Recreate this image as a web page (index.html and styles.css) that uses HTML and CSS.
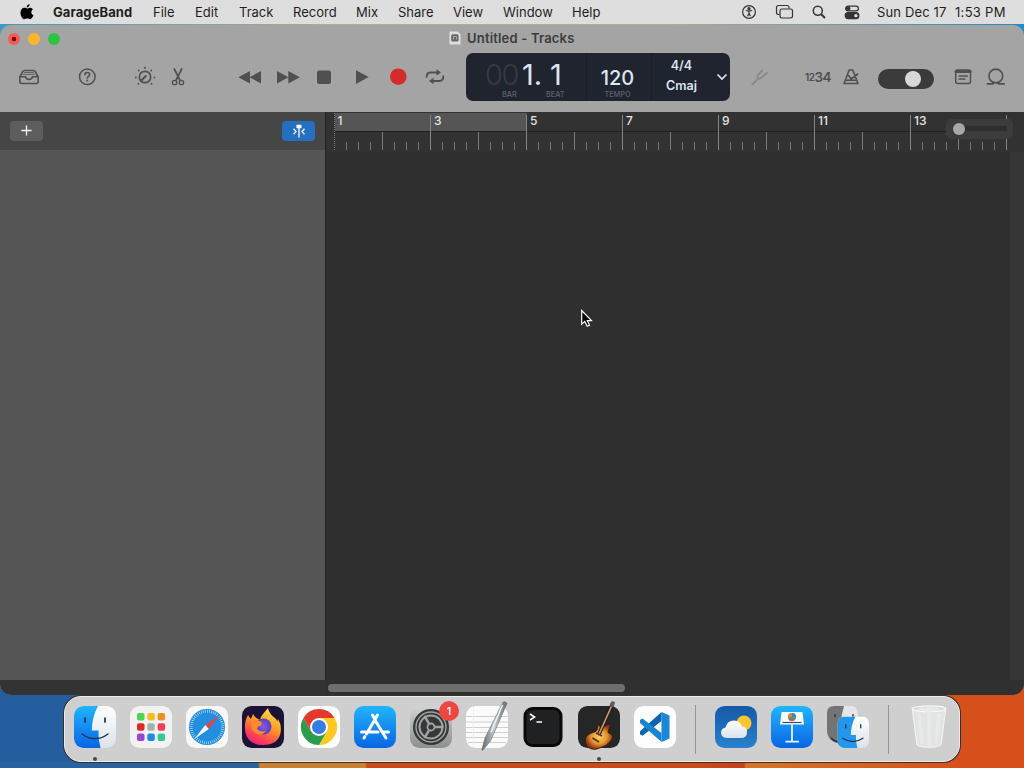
FILE: index.html
```html
<!DOCTYPE html>
<html lang="en">
<head>
    <meta charset="UTF-8">
    <meta name="viewport" content="width=device-width, initial-scale=1.0">
    <title>Untitled - Tracks</title>
    <link rel="stylesheet" href="styles.css">
</head>
<body>
    <header class="menubar">
        <svg class="apple" width="14" height="16" viewBox="0 0 14 16"><path d="M9.6 0.3c.1 1.7-1.300 3.200-2.900 3.200C6.500 1.900 8 .5 9.600.3zM7 4.500c.8 0 1.600-.8 3-.8 1.200 0 2.300.6 3 1.600-2.500 1.500-2.100 5 .5 6-.6 1.600-2 4-3.500 4-1.100 0-1.500-.7-2.800-.7s-1.800.7-2.800.7C2.600 15.300.5 11.900.5 8.700c0-3.100 1.900-4.900 3.900-4.900 1.200 0 2 .7 2.600.7z"/></svg>
        <nav class="menus">
            <b>GarageBand</b>
            <span>File</span>
            <span>Edit</span>
            <span>Track</span>
            <span>Record</span>
            <span>Mix</span>
            <span>Share</span>
            <span>View</span>
            <span>Window</span>
            <span>Help</span>
        </nav>
        <div class="status">
            <svg width="16" height="16" viewBox="0 0 16 16"><circle cx="8" cy="8" r="6.400"/><circle cx="8" cy="4.700" r="1" class="fill"/><path d="M4.800 6.500L8 7.100l3.200-.6M8 7v2.200L6.600 12.200M8 9.200l1.400 3"/></svg>
            <svg width="19" height="16" viewBox="0 0 19 16"><path d="M4.500 10.500H3.400a1.900 1.900 0 0 1-1.900-1.900V3.400a1.900 1.900 0 0 1 1.900-1.900h8.700A1.900 1.900 0 0 1 14 3.400v1.100"/><rect x="5" y="5" width="12.500" height="9" rx="1.900"/></svg>
            <svg width="16" height="16" viewBox="0 0 16 16"><circle cx="6.800" cy="6.800" r="4.500" stroke-width="1.500"/><path d="M10.200 10.200L14 14" stroke-width="2"/></svg>
            <svg width="16" height="16" viewBox="0 0 16 16"><rect x="1.600" y="2.100" width="12.800" height="4.800" rx="2.400"/><circle cx="4.200" cy="4.500" r="1.700" class="fill"/><rect x="1.200" y="8.700" width="13.600" height="5.900" rx="2.900" class="fill"/><circle cx="11.900" cy="11.650" r="1.700" fill="#ddd" stroke="none"/></svg>
            <span class="date">Sun Dec 17</span>
            <span class="time">1:53 PM</span>
        </div>
    </header>

    <main class="window">
        <div class="titlebar">
            <div class="lights"><i class="close"></i><i class="minimize"></i><i class="zoom"></i></div>
            <div class="title">
                <svg width="12" height="14" viewBox="0 0 12 14"><path d="M.5.5h8.300l2.700 2.700v10.300H.5z" fill="#dedede"/><rect x="2.200" y="3.200" width="7.400" height="7.400" rx="1.500" fill="#666"/><path d="M4.500 8.500V5.500h3v3" stroke="#aaa" fill="none"/></svg>
                <span>Untitled - Tracks</span>
            </div>
        </div>

        <div class="toolbar">
            <svg class="tool" viewBox="0 0 24 24"><path d="M2.800 12L5.500 7Q6.300 5.500 7.900 5.500h8.200q1.600 0 2.400 1.500L21.200 12v4.500q0 2-2 2H4.800q-2 0-2-2zM3 11.700h5.500q.5 2.800 3.500 2.800t3.500-2.800H21" stroke-width="1.600"/><path d="M6.200 9.400h11.600M7.500 7.500h9" stroke-width=".8"/></svg>
            <svg class="tool" viewBox="0 0 24 24"><circle cx="12.300" cy="11.700" r="7.800" stroke-width="1.500"/><path d="M9.900 9.800q0-2.300 2.400-2.300t2.400 2.100c0 1.700-2.400 1.700-2.400 3.400" stroke-width="1.600"/><circle cx="12.300" cy="15.500" r="1" class="fill"/></svg>
            <svg class="tool" viewBox="0 0 24 24"><circle cx="12" cy="12" r="5.700" stroke-width="1.700"/><path d="M8.800 15l4-4" stroke-width="2"/><path d="M12 2.800v.1M5.700 5.500v.1M18.300 5.500v.1M2.800 12.500v.1M21.300 12.500v.1M5.500 18.700v.1M18.500 18.700v.1" stroke-width="1.900"/></svg>
            <svg class="tool" viewBox="0 0 24 24"><path d="M8.300 4l5.800 11.500M15.700 4L9.900 15.500" stroke-width="1.700"/><circle cx="8.600" cy="17.500" r="2.200"/><circle cx="15.400" cy="17.500" r="2.200"/></svg>
            <svg class="tool solid" viewBox="0 0 24 24"><path d="M.3 12.300L12 6v12.600zM11.500 12.300L23 6v12.600z"/></svg>
            <svg class="tool solid" viewBox="0 0 24 24"><path d="M1 6l11.500 6.300L1 18.600zM12.300 6l11.500 6.300-11.500 6.300z"/></svg>
            <svg class="tool solid" viewBox="0 0 24 24"><rect x="5" y="5.500" width="14" height="13.500" rx="2"/></svg>
            <svg class="tool solid" viewBox="0 0 24 24"><path d="M6 5.300l12.700 6.800L6 18.900z"/></svg>
            <svg class="tool" viewBox="0 0 24 24"><circle cx="12.300" cy="11.700" r="8.300" fill="#d42c2b" stroke="none"/></svg>
            <svg class="tool" viewBox="0 0 24 24"><path d="M3.700 11.700q0-4.200 4-4.200h7M20.300 11.300q0 4.700-4 4.700h-7" stroke-width="1.900"/><path d="M13.500 4.200l4.500 3.300-4.500 3.300zM10.500 12.700L6 16l4.500 3.300z" class="fill"/></svg>

            <section class="lcd">
                <div class="position">
                    <span class="digits"><em>00</em><span>1.</span><span>1</span></span>
                    <span class="captions"><small>BAR</small><small>BEAT</small></span>
                </div>
                <div class="tempo"><span>120</span><small>TEMPO</small></div>
                <div class="key"><span>4/4</span><span>Cmaj</span></div>
                <div class="more"><svg width="12" height="8" viewBox="0 0 12 8"><path d="M1.500 1.500L6 6l4.500-4.500"/></svg></div>
            </section>

            <svg class="tool faint" viewBox="0 0 24 24"><path d="M4.500 19.500L9 15M14 5.500l-3.500 4q-1.900 2.300-.6 3.600t3.600-.6l5.500-4.500" stroke-width="1.900"/></svg>
            <span class="count"><small>12</small>34</span>
            <svg class="tool" viewBox="0 0 24 24"><path d="M10.200 5h3.600l5.200 13.500H5zM6.300 15.200h11.400M11.500 14.500L18.700 9M9.500 10.500l2.500 3" stroke-width="1.600"/></svg>
            <div class="switch"><i></i></div>
            <svg class="tool" viewBox="0 0 24 24"><rect x="4.700" y="5" width="14.800" height="13.500" rx="2" stroke-width="1.500"/><path d="M5 6.500h14.200" stroke-width="3"/><path d="M8 11h8.500M8 14h6"/></svg>
            <svg class="tool" viewBox="0 0 24 24"><circle cx="11.800" cy="11" r="6.900" stroke-width="1.600"/><path d="M3.300 18.900h4.500q2 0 2-1.500M20.300 18.900h-4.500q-2 0-2-1.500" stroke-width="1.600"/></svg>
        </div>

        <div class="workspace">
            <aside class="tracks">
                <div class="tracks-head">
                    <button class="add"><svg width="14" height="14" viewBox="0 0 14 14"><path d="M7 1.500v11M1.500 7h11"/></svg></button>
                    <button class="catch"><svg width="14" height="14" viewBox="0 0 14 14"><path d="M4.500 .8h5v3.400h-5z" fill="#fff" stroke="none"/><path d="M7 3v10.500M1.500 4.800L4 7.600l-2.500 2.800M12.500 4.800L10 7.600l2.500 2.800"/></svg></button>
                </div>
                <div class="track-list"></div>
                <div class="strip"></div>
            </aside>
            <section class="arrange">
                <div class="ruler">
                    <!-- one bar is 48px, one beat is 12px -->
                    <svg class="scale" width="699" height="40" viewBox="325 112 699 40">
                        <defs>
                            <pattern id="beat" x="334" y="142" width="12" height="8" patternUnits="userSpaceOnUse"><rect width="1" height="8" fill="#757575"/></pattern>
                            <pattern id="bar" x="334" y="132" width="48" height="18" patternUnits="userSpaceOnUse"><rect width="1" height="18" fill="#7c7c7c"/></pattern>
                            <pattern id="bars" x="334" y="115" width="96" height="35" patternUnits="userSpaceOnUse"><rect width="1" height="35" fill="#858585"/></pattern>
                        </defs>
                        <rect x="335" y="113" width="192" height="18" fill="#555"/>
                        <path d="M334 131.500h676" stroke="#202020"/>
                        <rect x="340" y="142" width="669" height="8" fill="url(#beat)"/>
                        <rect x="340" y="132" width="669" height="18" fill="url(#bar)"/>
                        <rect x="340" y="115" width="669" height="35" fill="url(#bars)"/>
                        <path d="M334.500 113v38" stroke="#777" stroke-dasharray="1 1"/>
                        <g class="numbers">
                            <text x="337.500" y="125">1</text><text x="434" y="125">3</text><text x="530" y="125">5</text><text x="626" y="125">7</text><text x="722" y="125">9</text><text x="818" y="125">11</text><text x="914" y="125">13</text>
                        </g>
                    </svg>
                    <div class="hzoom"><i></i></div>
                </div>
                <div class="canvas">
                    <svg class="pointer" width="14" height="20" viewBox="0 0 14 20"><path d="M1.700 1.500v13.700l3.100-2.800 2.400 4.800 2.300-1.100-2.200-4.400h4.200z" fill="#050505" stroke="#fff" stroke-width="1.200"/></svg>
                </div>
                <div class="strip"><i class="scrollbar"></i></div>
            </section>
        </div>
    </main>

    <footer class="dock">
        <div class="app running">
            <svg viewBox="0 0 42 42">
                <defs>
                    <linearGradient id="blue" x2="0" y2="1"><stop stop-color="#20b5fb"/><stop offset="1" stop-color="#0965e5"/></linearGradient>
                    <linearGradient id="light" x2="0" y2="1"><stop stop-color="#fff"/><stop offset="1" stop-color="#dbe3ed"/></linearGradient>
                    <clipPath id="tile"><rect width="42" height="42" rx="9.500"/></clipPath>
                </defs>
                <g clip-path="url(#tile)">
                    <path d="M0 0h42v42H0z" fill="url(#light)"/>
                    <path d="M0 0h24q-6 11-6.200 24.500h6.700Q24 33 26.500 42H0z" fill="url(#blue)"/>
                </g>
                <path d="M11 12v4M31 12v4" stroke="#17324c" stroke-width="1.700" stroke-linecap="round"/>
                <path d="M8 28q13 9.500 26 0" stroke="#20354a" stroke-width="1.500" fill="none" stroke-linecap="round"/>
            </svg>
        </div>
        <div class="app">
            <svg viewBox="0 0 42 42">
                <rect width="42" height="42" rx="9.500" fill="#f2f2f2"/>
                <rect x="7" y="7" width="7.500" height="7.500" rx="2" fill="#4ed34f"/><rect x="17.300" y="7" width="7.500" height="7.500" rx="2" fill="#f2bd25"/><rect x="27.600" y="7" width="7.500" height="7.500" rx="2" fill="#ef9121"/>
                <rect x="7" y="17.300" width="7.500" height="7.500" rx="2" fill="#df2926"/><rect x="17.300" y="17.300" width="7.500" height="7.500" rx="2" fill="#9eb5aa"/><rect x="27.600" y="17.300" width="7.500" height="7.500" rx="2" fill="#ef4057"/>
                <rect x="7" y="27.600" width="7.500" height="7.500" rx="2" fill="#9d43d6"/><rect x="17.300" y="27.600" width="7.500" height="7.500" rx="2" fill="#2288e6"/><rect x="27.600" y="27.600" width="7.500" height="7.500" rx="2" fill="#35c994"/>
            </svg>
        </div>
        <div class="app">
            <svg viewBox="0 0 42 42">
                <rect width="42" height="42" rx="9.500" fill="#f7f7f7"/>
                <circle cx="21" cy="21" r="18" fill="#238ee0"/>
                <circle cx="21" cy="21" r="15.700" fill="none" stroke="#b4daf5" stroke-width="2.800" stroke-dasharray=".7 1.350"/>
                <path d="M33.500 9L19.200 19l3.600 4z" fill="#e44444"/><path d="M8.500 33L19.200 19l3.600 4z" fill="#f4f8fa"/>
            </svg>
        </div>
        <div class="app">
            <svg viewBox="0 0 42 42">
                <defs>
                    <linearGradient id="fox" x1=".8" y1="0" x2=".3" y2="1"><stop stop-color="#ffe84a"/><stop offset=".45" stop-color="#ff9a24"/><stop offset=".8" stop-color="#ff4058"/><stop offset="1" stop-color="#e62678"/></linearGradient>
                    <radialGradient id="globe"><stop stop-color="#8b55ec"/><stop offset="1" stop-color="#5643b5"/></radialGradient>
                </defs>
                <rect width="42" height="42" rx="9.500" fill="#1c1236"/>
                <path d="M6 9q1 2 3 4l2-5q2 4 7 6 1-4 3-6l5-6q1 6 8 11 1 1 1 3l1-3q4 6 2.500 14Q36 39 21 39T3.300 26Q1.800 16 6 9z" fill="url(#fox)"/>
                <circle cx="21.500" cy="20.500" r="8" fill="url(#globe)"/>
                <path d="M10 15q6-2 10 1.500l-1 3q-4 .5-4 3.500 3 4 9 1.500-4 6-10 3Q7 23 10 15z" fill="#ff8a28"/>
            </svg>
        </div>
        <div class="app">
            <svg viewBox="0 0 42 42">
                <rect width="42" height="42" rx="9.500" fill="#fcfcfc"/>
                <path d="M21 12h15.600A18 18 0 0 1 21 39l7.800-13.500z" fill="#fdc921"/>
                <path d="M5.400 12A18 18 0 0 0 21 39l7.800-13.500H13.200z" fill="#2b9c4c"/>
                <path d="M5.400 12l7.800 13.500L21 12h15.600A18 18 0 0 0 5.400 12z" fill="#e13a2d"/>
                <circle cx="21" cy="21" r="9" fill="#fff"/><circle cx="21" cy="21" r="7" fill="#357de1"/>
            </svg>
        </div>
        <div class="app">
            <svg viewBox="0 0 42 42">
                <rect width="42" height="42" rx="9.500" fill="url(#blue)"/>
                <path d="M23.500 9L12.500 28M18.500 9l3 5.200M21.500 15l10.500 17M7.500 26H24M29.500 26h5M10.800 30.700L10 32" stroke="#fff" stroke-width="3" stroke-linecap="round"/>
            </svg>
        </div>
        <div class="app">
            <svg viewBox="0 0 42 42">
                <defs><linearGradient id="steel" x2="0" y2="1"><stop stop-color="#d2d4d4"/><stop offset="1" stop-color="#8c8f8d"/></linearGradient></defs>
                <rect width="42" height="42" rx="9.500" fill="url(#steel)"/>
                <circle cx="21" cy="21" r="18" fill="#343838"/>
                <circle cx="21" cy="21" r="15" fill="none" stroke="#a2a5a4" stroke-width="1.400"/>
                <circle cx="21" cy="21" r="11.500" fill="none" stroke="#a2a5a4" stroke-width="2"/>
                <path d="M23.500 21h10M19.700 18.800l-5.300-9M19.700 23.200l-5.300 9" stroke="#a2a5a4" stroke-width="2.500"/>
                <circle cx="21" cy="21" r="3.500" fill="#343838" stroke="#a2a5a4" stroke-width="1.800"/>
            </svg>
            <b class="badge">1</b>
        </div>
        <div class="app">
            <svg viewBox="0 0 42 42">
                <defs><linearGradient id="pen"><stop stop-color="#5e6666"/><stop offset=".5" stop-color="#c5cecf"/><stop offset="1" stop-color="#626c6d"/></linearGradient></defs>
                <rect width="42" height="42" rx="9.500" fill="#fbfbfb"/>
                <path d="M0 10.500h42M0 16h42M0 21.500h42M0 26.500h42M0 31.500h42M2 36.500h38" stroke="#cfcfcf"/><path d="M7.500 0v42" stroke="#eee"/>
                <path d="M37-4q3-1 4 1.500L24.500 35l-8 9.500-.7-.7L19 32z" fill="url(#pen)" stroke="#697070" stroke-width=".6"/>
                <path d="M36.500-1L25 26" stroke="#edf6f6" stroke-width="1.500"/>
            </svg>
        </div>
        <div class="app">
            <svg viewBox="0 0 42 42">
                <rect x="1.500" y="1" width="39" height="40" rx="9" fill="#090909"/>
                <rect x="4.500" y="4" width="33" height="34" rx="6" fill="#202123"/>
                <path d="M8 8l4.500 3L8 14M14.500 16H20" stroke="#fff" stroke-width="1.600" fill="none"/>
            </svg>
        </div>
        <div class="app running">
            <svg viewBox="0 0 42 42">
                <defs><radialGradient id="wood"><stop stop-color="#f9ce5c"/><stop offset=".55" stop-color="#e89a32"/><stop offset="1" stop-color="#8c3512"/></radialGradient></defs>
                <rect width="42" height="42" rx="9.500" fill="#262626"/>
                <path d="M19 19q2-1 4.500 3l5-3q5-2 3 3-3 5 1 6 4 2 1 6-5 7-12 8-6 3-12-1-4-6-1-11 3-3 8-4 4-1 2.500-7z" fill="url(#wood)" stroke="#3c1a0d" stroke-width="1"/>
                <path d="M21 28L34.500-2" stroke="#2c1710" stroke-width="3.800"/><path d="M21 28L34.500-2" stroke="#bd9a83" stroke-width="1.700"/>
                <path d="M32-2l2-3 3 1-1 4-3 1z" fill="#635c58"/><path d="M14.500 32l6.500 4M18 27l6 3" stroke="#5a3519" stroke-width="1.900"/>
            </svg>
        </div>
        <div class="app">
            <svg viewBox="0 0 42 42">
                <rect width="42" height="42" rx="9.500" fill="#fdfdfd"/>
                <path d="M27.500 6L6 25.200v3l2.500 1.600L27.500 15z" fill="#0b65b0"/>
                <path d="M27.500 36L6 17v-3l2.500-1.600L27.500 27z" fill="#1785d0"/>
                <path d="M27.500 6L35.500 9.500v23L27.500 36z" fill="#1c86d8"/>
            </svg>
        </div>
        <hr>
        <div class="app">
            <svg viewBox="0 0 42 42">
                <defs><linearGradient id="sky" x2="0" y2="1"><stop stop-color="#1559a8"/><stop offset="1" stop-color="#2981ce"/></linearGradient></defs>
                <rect width="42" height="42" rx="9.500" fill="url(#sky)"/>
                <circle cx="29" cy="17" r="7.500" fill="#fbc52d"/>
                <path d="M12 32q-6-.5-6-5.500 0-4 4.500-5 1.500-7 8.500-7 6 0 8 6 5 0 5 5.500 0 6-6 6z" fill="url(#light)"/>
            </svg>
        </div>
        <div class="app">
            <svg viewBox="0 0 42 42">
                <rect width="42" height="42" rx="9.500" fill="url(#blue)"/>
                <path d="M10.500 6h21l1.500 12.500H9z" fill="#fbfdfe"/><path d="M11.500 16.500h19" stroke="#345068" stroke-width="1.200"/>
                <circle cx="21" cy="11" r="4" fill="#31ad78"/><path d="M21 11V7a4 4 0 0 1 4 4z" fill="#3087d9"/><path d="M21 11h-4a4 4 0 0 1 4-4z" fill="#ef7b36"/><path d="M21 11l-3 3a4 4 0 0 0 5 .5z" fill="#df4951"/>
                <path d="M21 18.500V35M14.500 35.700h13.500" stroke="#e8f6ff" stroke-width="1.800"/>
            </svg>
        </div>
        <div class="app">
            <svg viewBox="0 0 42 42">
                <rect width="31" height="31" rx="7" fill="#e6e6e6"/>
                <path d="M7 0h10q-3 9-3 18v20Q0 36 0 24V7q0-7 7-7z" fill="#727476"/><path d="M8 8v3M26 8v3M4 32q5 5 10 3" stroke="#263038" stroke-width="1.300" fill="none"/>
                <g transform="translate(10.500 10.500) scale(.75)">
                    <g clip-path="url(#tile)"><path d="M0 0h42v42H0z" fill="url(#light)"/><path d="M0 0h24q-6 11-6.200 24.500h6.700Q24 33 26.500 42H0z" fill="#2496ec"/></g>
                    <path d="M11 11v4M31 11v4M7 29q13 9 27 0" stroke="#18344d" stroke-width="1.700" fill="none" stroke-linecap="round"/>
                </g>
            </svg>
        </div>
        <hr>
        <div class="app bin">
            <svg viewBox="0 0 42 42">
                <path d="M2.500 1.500l5 39q.7 4 13.500 4t13.500-4l5-39z" fill="#e2e4e3" stroke="#f2f3f3" stroke-width="1.200"/>
                <path d="M10 7l3 33M21 7v35M32 7l-3 33" stroke="#e8eae9" stroke-width="4"/>
                <ellipse cx="21" cy="2" rx="18.500" ry="3.200" fill="#d8dada" stroke="#f8f8f8" stroke-width="1.200"/>
                <path d="M8 3l5-3 4 1 4-3 4 3 5-1 4 3q-13 4-26 0z" fill="#e8e9e9"/>
            </svg>
        </div>
    </footer>
</body>
</html>
```
FILE: styles.css
```css
* {
    box-sizing: border-box;
}
body {
    margin: 0;
    width: 1024px;
    height: 768px;
    overflow: hidden;
    font-family: Inter, "Liberation Sans", sans-serif;
    font-size: 13px;
    color: #1e1e1e;
    background:
        linear-gradient(90deg, #26639f 0 258px, #cc8033 260px 365px, #cd4b18 367px 690px, #c8401b 744px, #d87425 746px, #d7501c 960px) 0 762px / 1024px 6px no-repeat,
        linear-gradient(90deg, #3f97c9, #b3b176 34%, #b0ae80 65%, #258ac7) 0 24px / 1024px 12px no-repeat,
        linear-gradient(90deg, #245e9f 0 500px, #d5501b 500px);
}
svg {
    display: block;
    overflow: visible;
}

/* Menu bar */
.menubar {
    display: flex;
    align-items: center;
    height: 24px;
    padding-left: 20px;
    background-color: #dedede;
}
.menus {
    display: grid;
    grid-template-columns: 100px 42px 44px 54px 63px 42px 55px 50px 69px 60px;
    width: 688px;
    margin: -1px 0 0 19px;
    white-space: nowrap;
}
.menus b {
    letter-spacing: 0.1px;
}
.status {
    display: grid;
    grid-template-columns: 34px 36px 33px 33px 78px auto;
    align-items: center;
    white-space: nowrap;
}
.status span {
    margin-top: -1px;
    letter-spacing: 0.15px;
}
.status .time {
    letter-spacing: 0.3px;
}
.status svg {
    fill: none;
    stroke: #333;
    stroke-width: 1.2;
}
.status .fill {
    fill: #333;
}

/* Window */
.window {
    height: 670px;
    margin-top: 1px;
    border-radius: 11px;
    overflow: hidden;
    background-color: #a4a4a4;
}
.titlebar {
    display: flex;
    align-items: center;
    height: 27px;
    padding-left: 8px;
}
.lights {
    display: flex;
    gap: 8px;
    width: 441px;
}
.lights i {
    width: 12px;
    height: 12px;
    border-radius: 50%;
}
.close {
    background: radial-gradient(circle, #780d0b 2px, #f45b57 2.6px);
}
.minimize {
    background-color: #fbb52b;
}
.zoom {
    background-color: #2ec243;
}
.title {
    display: flex;
    align-items: center;
    gap: 6px;
    margin-top: -1px;
    font-weight: 600;
    letter-spacing: 0.18px;
    color: #3c3c3c;
}
.toolbar {
    display: grid;
    grid-template-columns: 58px 58px 33px 72px 38px 36px 38px 36px 37px 43px 282px 56px 35px 39px 73px 33px 24px;
    align-items: center;
    height: 60px;
    padding: 0 0 10px 17px;
    color: #505050;
}
.tool {
    width: 24px;
    height: 24px;
    fill: none;
    stroke: currentColor;
    stroke-width: 1.3;
    stroke-linejoin: round;
    stroke-linecap: round;
}
.tool.solid,
.tool .fill {
    fill: currentColor;
    stroke: none;
}
.tool.faint {
    color: #8a8a8a;
}
.count {
    margin-left: 1px;
    font-size: 13.5px;
    font-weight: 600;
    letter-spacing: -0.5px;
    white-space: nowrap;
}
.count small {
    font-size: 10px;
    vertical-align: 1px;
}
.switch {
    display: flex;
    justify-content: flex-end;
    align-items: center;
    width: 56px;
    height: 20px;
    margin-top: 3px;
    padding-right: 13px;
    border-radius: 10px;
    background-color: #3b3b3b;
}
.switch i {
    width: 16px;
    height: 16px;
    border-radius: 50%;
    background-color: #d8d8d8;
}

/* Transport display */
.lcd {
    display: grid;
    grid-template-columns: 120px 65px 60px 19px;
    width: 264px;
    height: 48px;
    border-radius: 7px;
    background-color: #20242f;
    color: #dce5f3;
}
.lcd small {
    font-size: 7.3px;
    font-weight: 500;
    line-height: 9px;
    color: #5d626c;
}
.position {
    padding: 4px 0 0 19px;
}
.digits {
    display: grid;
    grid-template-columns: 37px 29px 16px;
    height: 33px;
    font-size: 29px;
    line-height: 36px;
}
.digits em {
    font-style: normal;
    font-weight: 300;
    letter-spacing: -1.5px;
    color: #363a43;
}
.digits span:last-child {
    margin-left: -1px;
}
.captions {
    display: grid;
    grid-template-columns: 44px 30px;
    padding-left: 17px;
}
.tempo {
    display: flex;
    flex-direction: column;
    align-items: center;
    padding-top: 14px;
    border-left: 1px solid #191d26;
    font-size: 20px;
    font-weight: 500;
    line-height: 23px;
}
.tempo > * {
    margin-right: 3px;
}
.key {
    display: flex;
    flex-direction: column;
    align-items: center;
    padding-top: 3px;
    border-left: 1px solid #191d26;
    font-size: 12.500px;
    font-weight: 600;
    line-height: 20px;
}
.more {
    display: flex;
    align-items: center;
    padding-left: 5px;
}
.more svg {
    fill: none;
    stroke: #dce5f3;
    stroke-width: 1.7;
}

/* Tracks area */
.workspace {
    display: grid;
    grid-template-columns: 325px 699px;
    height: 583px;
}
.tracks,
.arrange {
    display: flex;
    flex-direction: column;
}
.tracks-head {
    display: flex;
    justify-content: space-between;
    height: 38px;
    padding: 9px 10px;
    background-color: #464646;
}
.tracks-head button {
    display: flex;
    align-items: center;
    justify-content: center;
    width: 33px;
    height: 20px;
    padding: 0;
    border: 0;
    border-radius: 4px;
    background-color: #5d5d5d;
}
.tracks-head .catch {
    background-color: #246fc0;
}
.tracks-head svg {
    fill: none;
    stroke: #f4f4f4;
    stroke-width: 1.4;
}
.tracks-head .add svg {
    width: 13px;
    height: 13px;
    margin-top: -2px;
}
.track-list {
    flex: 1;
    background-color: #565656;
}
.strip {
    height: 15px;
    padding: 4px 0 0 3px;
    background-color: #333;
}
.arrange .strip {
    background-color: #303030;
}
.scrollbar {
    display: block;
    width: 297px;
    height: 8px;
    border-radius: 4px;
    background-color: #6e6e6e;
}
.ruler {
    position: relative;
    height: 40px;
    background-color: #323232;
    border-left: 1px solid #222;
}
.scale {
    margin-left: -1px;
}
.numbers {
    font-size: 12px;
    font-weight: 500;
    fill: #e4e4e4;
}
.hzoom {
    position: absolute;
    top: 7px;
    right: 11px;
    display: flex;
    align-items: center;
    width: 67px;
    height: 20px;
    padding-left: 7px;
    border-radius: 5px;
    background: linear-gradient(#2e2e2e, #2e2e2e) 15px 7px / 46px 5px no-repeat #3c3c3c;
}
.hzoom i {
    width: 12px;
    height: 12px;
    border-radius: 50%;
    background-color: #a8a8a8;
}
.canvas {
    position: relative;
    flex: 1;
    background-color: #2f2f2f;
    border-left: 1px solid #252525;
    border-right: 14px solid #363636;
}
.pointer {
    position: absolute;
    left: 254px;
    top: 157px;
}

/* Dock */
.dock {
    display: flex;
    align-items: flex-start;
    gap: 14px;
    width: 896px;
    height: 66px;
    margin: 1px auto 0 64px;
    padding: 9px 0 0 9px;
    border: 1px solid #ededed;
    border-radius: 17px;
    background-color: #cfcfcf;
    box-shadow: 0 0 0 1px #3b302c;
}
.app {
    position: relative;
    flex: none;
    width: 42px;
    height: 42px;
}
.running::after {
    content: "";
    position: absolute;
    left: 19px;
    top: 51px;
    width: 4px;
    height: 4px;
    border-radius: 50%;
    background-color: #484848;
}
.badge {
    position: absolute;
    top: -5px;
    right: -7px;
    width: 20px;
    height: 20px;
    border-radius: 50%;
    background-color: #ef4740;
    color: #fff;
    font-size: 11px;
    font-weight: 500;
    line-height: 20px;
    text-align: center;
}
.dock hr {
    width: 1px;
    height: 49px;
    margin: -1px 5px 0;
    border: 0;
    background-color: #949494;
}
.bin {
    width: 38px;
    height: 38px;
    margin: 1px 0 0 2px;
}
```
